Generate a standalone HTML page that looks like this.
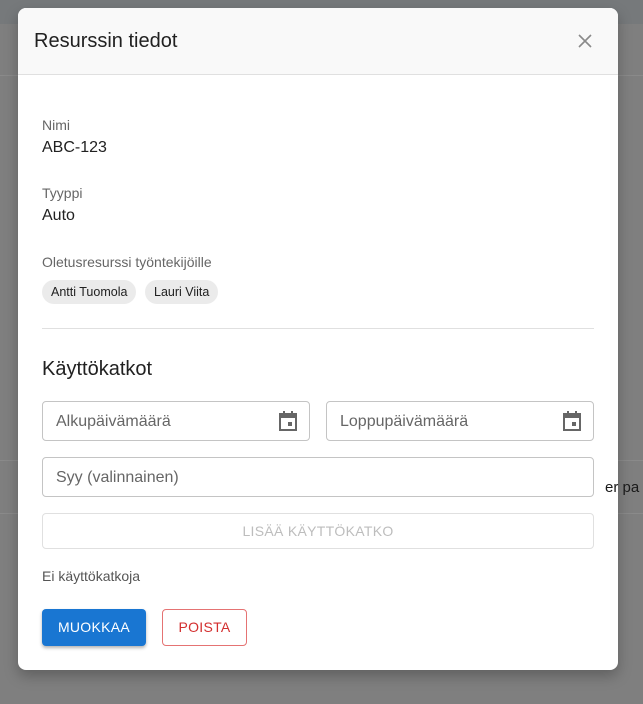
<!DOCTYPE html>
<html><head><meta charset="utf-8"><style>
*{box-sizing:border-box;margin:0;padding:0}
body{width:643px;height:704px;overflow:hidden;background:#7f7f7f;font-family:"Liberation Sans",sans-serif;position:relative}
.topbar{position:absolute;left:0;top:0;width:643px;height:24px;background:#76797b}
.hl{position:absolute;left:0;width:643px;height:1px;background:#8a8a8a}
.bgtext{position:absolute;left:605px;top:479px;font-size:15px;color:#1a1a1a;z-index:5}
.modal{position:absolute;left:18px;top:8px;width:600px;height:662px;background:#fff;border-radius:8px;overflow:hidden;box-shadow:0 6px 14px rgba(0,0,0,.25)}
.hdr{height:67px;background:#f9f9f9;border-bottom:1px solid #e0e0e0;position:relative}
.hdr h2{position:absolute;left:16px;top:22px;font-size:20px;font-weight:normal;color:#212121}
.close{position:absolute;left:560px;top:26px}
.lbl{position:absolute;left:24px;font-size:14px;color:#666}
.val{position:absolute;left:24px;font-size:16px;color:#212121}
.chip{position:absolute;top:272px;height:24px;border-radius:12px;background:#ebebeb;font-size:12.5px;color:#212121;line-height:24px;padding:0 9px}
.sep{position:absolute;left:24px;top:320px;width:552px;height:1px;background:#e0e0e0}
.h3{position:absolute;left:24px;top:350px;font-size:20px;color:#212121}
.field{position:absolute;height:40px;border:1px solid #c4c4c4;border-radius:4px;font-size:16px;color:#666;line-height:40px;padding-left:13px}
.cal{position:absolute;right:11px;top:9px}
.add{position:absolute;left:24px;top:505px;width:552px;height:36px;border:1px solid #e0e0e0;border-radius:4px;text-align:center;line-height:34px;font-size:14px;color:#bdbdbd;letter-spacing:.3px}
.btn{position:absolute;top:601px;height:37px;border-radius:4px;font-size:14px;line-height:37px;text-align:center;letter-spacing:.3px}
</style></head><body>
<div class="topbar"></div>
<div class="hl" style="top:75px"></div>
<div class="hl" style="top:460px"></div>
<div class="hl" style="top:513px"></div>
<div class="modal">
<div class="hdr"><h2>Resurssin tiedot</h2>
<svg class="close" width="14" height="14" viewBox="0 0 14 14"><path d="M1 1L13 13M13 1L1 13" stroke="#8a8a8a" stroke-width="1.6"/></svg></div>
<div class="lbl" style="top:109px">Nimi</div>
<div class="val" style="top:131px">ABC-123</div>
<div class="lbl" style="top:177px">Tyyppi</div>
<div class="val" style="top:199px">Auto</div>
<div class="lbl" style="top:246px">Oletusresurssi työntekijöille</div>
<div class="chip" style="left:24px">Antti Tuomola</div>
<div class="chip" style="left:127px">Lauri Viita</div>
<div class="sep"></div>
<div class="h3">Käyttökatkot</div>
<div class="field" style="left:24px;top:393px;width:268px">Alkupäivämäärä
<svg class="cal" width="20" height="20" viewBox="0 0 20 20"><rect x="2" y="3" width="16" height="16" fill="none" stroke="#666" stroke-width="2"/><rect x="2" y="3" width="16" height="4" fill="#666"/><rect x="5" y="0" width="2" height="4" fill="#666"/><rect x="13" y="0" width="2" height="4" fill="#666"/><rect x="10" y="11" width="4" height="4" fill="#666"/></svg></div>
<div class="field" style="left:308px;top:393px;width:268px">Loppupäivämäärä
<svg class="cal" width="20" height="20" viewBox="0 0 20 20"><rect x="2" y="3" width="16" height="16" fill="none" stroke="#666" stroke-width="2"/><rect x="2" y="3" width="16" height="4" fill="#666"/><rect x="5" y="0" width="2" height="4" fill="#666"/><rect x="13" y="0" width="2" height="4" fill="#666"/><rect x="10" y="11" width="4" height="4" fill="#666"/></svg></div>
<div class="field" style="left:24px;top:449px;width:552px">Syy (valinnainen)</div>
<div class="add">LISÄÄ KÄYTTÖKATKO</div>
<div class="lbl" style="top:560px;color:#555">Ei käyttökatkoja</div>
<div class="btn" style="left:24px;width:104px;background:#1976d2;color:#fff;box-shadow:0 2px 3px rgba(0,0,0,.3)">MUOKKAA</div>
<div class="btn" style="left:144px;width:85px;border:1px solid #e57373;color:#d32f2f;line-height:35px">POISTA</div>
</div>
<div class="bgtext">er pa</div>
</body></html>
